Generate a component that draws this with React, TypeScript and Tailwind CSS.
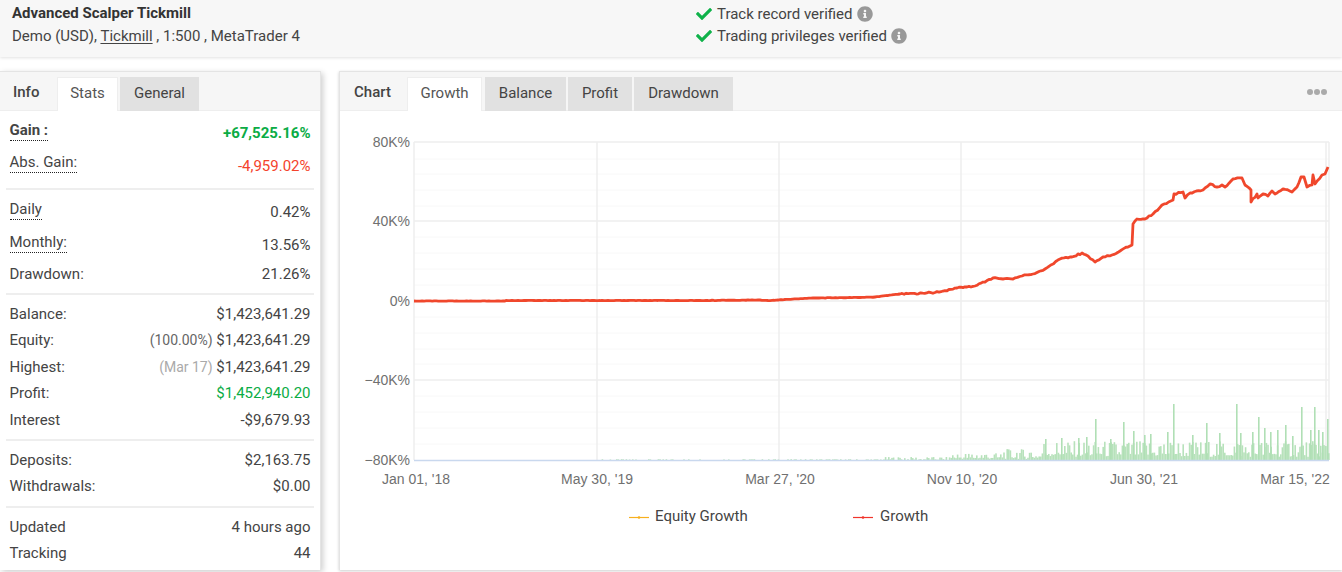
import { FaCheck, FaInfoCircle } from "react-icons/fa";

const font = { fontFamily: '"Roboto", "Liberation Sans", sans-serif' };

// pseudo random but stable numbers for the jagged line and the volume bars
function rnd(i: number) {
  const v = Math.sin(i * 12.9898) * 43758.5453;
  return v - Math.floor(v);
}

// growth curve, read off the reference in page coordinates
const knots: [number, number][] = [
  [414, 301], [505, 301], [506, 300.5], [700, 300.5], [760, 300], [768, 300.5], [815, 298], [858, 297.5], [875, 297], [900, 294],
  [935, 292.5], [957, 288], [975, 286], [985, 282], [993, 278], [1003, 279], [1013, 279], [1022, 276],
  [1033, 274], [1045, 269], [1060, 259], [1072, 257], [1082, 253], [1088, 256], [1095, 262], [1103, 257],
  [1112, 255], [1120, 251], [1130, 246], [1132, 245], [1133, 224], [1137, 219], [1145, 219], [1153, 214],
  [1162, 205], [1173, 200], [1174, 194], [1183, 192], [1185, 198], [1190, 193], [1203, 190], [1210, 184],
  [1217, 187], [1222, 185], [1225, 187], [1233, 179], [1242, 178], [1245, 185], [1251, 190], [1251, 202],
  [1257, 194], [1258, 198], [1263, 194], [1268, 196], [1272, 191], [1275, 194], [1283, 189], [1292, 192],
  [1297, 187], [1301, 177], [1304, 177], [1307, 187], [1312, 185], [1313, 175], [1315, 184], [1322, 175],
  [1325, 174], [1328, 167],
];
const jagged: string[] = [];
knots.forEach(([x, y], k) => {
  jagged.push(`${x},${y}`);
  const next = knots[k + 1];
  if (!next) return;
  const steps = Math.floor((next[0] - x) / 2);
  for (let s = 1; s < steps; s++) {
    const t = s / steps;
    const amp = x > 880 ? 1.5 : 0.4;
    jagged.push(`${x + (next[0] - x) * t},${y + (next[1] - y) * t + (rnd(x + s) - 0.5) * amp}`);
  }
});
const linePoints = jagged.join(" ");

const peaks: [number, number][] = [
  [1045, 21], [1061, 22], [1095, 41], [1123, 38], [1133, 29], [1144, 25], [1173, 56], [1206, 37], [1236, 56],
  [1258, 43], [1285, 35], [1301, 53], [1314, 53], [1327, 41], [1167, 28], [1252, 28], [1270, 28], [1318, 30], [1322, 28],
  [1078, 22], [1086, 23], [1110, 21], [1150, 26], [1192, 25], [1219, 27], [1240, 27], [1264, 32], [1277, 30], [1292, 24], [1310, 30],
];
const bars: { x: number; h: number }[] = [];
for (let i = 0; i < 460; i++) {
  const x = 600 + i * 1.6;
  if (x > 1329) break;
  const r = rnd(i);
  let max = 0.8;
  if (x > 880) max = 3;
  if (x > 950) max = 6;
  if (x > 1000) max = 10;
  if (x > 1040) max = 16;
  const min = x > 1040 ? 3 : x > 950 ? 1 : 0;
  const h = min + (r < 0.6 ? max * r * 0.5 : max * r);
  if (h > 0.3 && (x > 880 || r > 0.6)) bars.push({ x, h });
}

const hMajor = [142, 221, 301, 380];
const hMinor = [159, 174, 190, 206, 237, 253, 269, 285, 317, 333, 349, 364, 396, 412, 428, 444];
const vLines = [414, 597, 779, 961, 1144, 1326, 1329];
const xLabels: [number, string][] = [
  [416, "Jan 01, '18"], [597, "May 30, '19"], [780, "Mar 27, '20"], [962, "Nov 10, '20"], [1144, "Jun 30, '21"], [1295, "Mar 15, '22"],
];
const yLabels: [number, string][] = [[147, "80K%"], [226, "40K%"], [306, "0%"], [385, "−40K%"], [465, "−80K%"]];

function Chart() {
  return (
    <svg viewBox="340 111 1002 459" className="block h-[459px] w-[1002px]">
      {hMinor.map((y) => (
        <line key={y} x1={414} x2={1329} y1={y} y2={y} stroke="#f8f8f8" strokeWidth={1} />
      ))}
      {hMajor.map((y) => (
        <line key={y} x1={414} x2={1329} y1={y} y2={y} stroke="#eeeeee" strokeWidth={1.5} />
      ))}
      {vLines.map((x) => (
        <line key={x} x1={x} x2={x} y1={142} y2={460} stroke="#eeeeee" strokeWidth={1.5} />
      ))}
      {bars.map((b) => (
        <rect key={b.x} x={b.x} y={460 - b.h} width={1.6} height={b.h} fill="#b7e2bb" />
      ))}
      {peaks.map(([x, h]) => (
        <rect key={x} x={x} y={460 - h} width={1.6} height={h} fill="#b0dfb5" />
      ))}
      <line x1={414} x2={1329} y1={460.5} y2={460.5} stroke="#c9d8ee" strokeWidth={1.5} />
      <polyline points={linePoints} fill="none" stroke="#f2a51f" strokeWidth={1} strokeLinejoin="round" />
      <polyline points={linePoints} fill="none" stroke="#f0472c" strokeWidth={2.8} strokeLinejoin="round" />
      <g fill="#707070" fontSize={14} style={{ fontFamily: '"Liberation Sans", sans-serif' }}>
        {yLabels.map(([y, t]) => (
          <text key={t} x={410} y={y} textAnchor="end">
            {t}
          </text>
        ))}
        {xLabels.map(([x, t]) => (
          <text key={t} x={x} y={484} textAnchor="middle">
            {t}
          </text>
        ))}
      </g>
      <line x1={629} x2={649} y1={517.5} y2={517.5} stroke="#f7b01e" strokeWidth={1.2} />
      <circle cx={639} cy={517.5} r={1.3} fill="#f7b01e" />
      <line x1={853} x2={873} y1={517.5} y2={517.5} stroke="#f0352c" strokeWidth={1.2} />
      <circle cx={863} cy={517.5} r={1.3} fill="#f0352c" />
      <g fill="#444444" fontSize={15} style={font}>
        <text x={655} y={521}>Equity Growth</text>
        <text x={880} y={521}>Growth</text>
      </g>
    </svg>
  );
}

function Row({ label, children }: { label: string; children: React.ReactNode }) {
  return (
    <div className="flex h-[26.6px] items-center justify-between px-[9.5px]">
      <span>{label}</span>
      <span>{children}</span>
    </div>
  );
}

function DotRow({ label, value, bold, valueClass }: { label: string; value: string; bold?: boolean; valueClass?: string }) {
  return (
    <div className="flex items-start justify-between px-[9.5px]">
      <span className={`border-b border-dotted border-[#222] leading-[19px] ${bold ? "font-bold" : ""}`}>{label}</span>
      <span className={`pt-[3px] leading-[19px] ${valueClass ?? ""}`}>{value}</span>
    </div>
  );
}

function Tab({ label, active, w }: { label: string; active?: boolean; w: string }) {
  return (
    <div
      className={`flex h-[34px] items-center justify-center pb-[2px] ${w} ${
        active ? "-mb-px border-x border-t border-[#eeeeee] bg-white text-[#555]" : "mb-[-1px] bg-[#e1e1e1] text-[#444]"
      }`}
    >
      {label}
    </div>
  );
}

const Divider = () => <div className="mx-[6px] h-[2px] bg-[#eeeeee]" />;

export default function App() {
  return (
    <div className="h-[572px] w-[1342px] overflow-hidden bg-white text-[15px] text-[#444]" style={font}>
      <header className="flex h-[57px] bg-[#f7f7f7] shadow-[0_1px_3px_rgba(0,0,0,0.12)]">
        <div className="w-[696px] pl-3 pt-[3px]">
          <div className="font-bold leading-[20px] text-[#333]">Advanced Scalper Tickmill</div>
          <div className="mt-[3px] leading-[20px]">
            Demo (USD), <span className="underline underline-offset-2">Tickmill</span> , 1:500 , MetaTrader 4
          </div>
        </div>
        <div className="pt-[3px] leading-[22px]">
          <div className="flex items-center">
            <FaCheck className="mr-[5px] h-[16px] w-[16px] text-[#0fb24a]" />
            Track record verified
            <FaInfoCircle className="ml-[4px] h-[16px] w-[16px] text-[#999]" />
          </div>
          <div className="flex items-center">
            <FaCheck className="mr-[5px] h-[16px] w-[16px] text-[#0fb24a]" />
            Trading privileges verified
            <FaInfoCircle className="ml-[4px] h-[16px] w-[16px] text-[#999]" />
          </div>
        </div>
      </header>

      <main className="mt-[14px] flex items-start gap-[18px]">
        <section className="h-[499px] w-[321px] shrink-0 border-t border-r border-[#e4e4e4] bg-white shadow-[2px_2px_6px_rgba(0,0,0,0.2)]">
          <div className="flex h-[39px] items-end border-b border-[#eeeeee] bg-[#f6f6f6]">
            <div className="flex h-[34px] w-[57px] items-center pb-[2px] pl-[13px] font-medium">Info</div>
            <Tab label="Stats" active w="w-[61px]" />
            <div className="w-[2px]" />
            <Tab label="General" w="w-[79px]" />
          </div>
          <div className="pt-[10px]">
            <DotRow label="Gain :" value="+67,525.16%" bold valueClass="font-bold text-[#0bac45]" />
            <div className="h-[10px]" />
            <DotRow label="Abs. Gain:" value="-4,959.02%" valueClass="translate-y-px text-[#f4432c]" />
            <div className="h-[13px]" />
            <Divider />
            <div className="h-[10px]" />
            <DotRow label="Daily" value="0.42%" />
            <div className="h-[11px]" />
            <DotRow label="Monthly:" value="13.56%" />
            <div className="h-[6px]" />
            <Row label="Drawdown:">21.26%</Row>
            <div className="h-[5px]" />
            <Divider />
            <div className="h-[6px]" />
            <Row label="Balance:">$1,423,641.29</Row>
            <Row label="Equity:">
              <span className="text-[14px] text-[#666]">(100.00%)</span> $1,423,641.29
            </Row>
            <Row label="Highest:">
              <span className="text-[14px] text-[#aaa]">(Mar 17)</span> $1,423,641.29
            </Row>
            <Row label="Profit:">
              <span className="text-[#0bac45]">$1,452,940.20</span>
            </Row>
            <Row label="Interest">-$9,679.93</Row>
            <div className="h-[5px]" />
            <Divider />
            <div className="h-[6px]" />
            <Row label="Deposits:">$2,163.75</Row>
            <Row label="Withdrawals:">$0.00</Row>
            <div className="h-[6px]" />
            <Divider />
            <div className="h-[6px]" />
            <Row label="Updated">4 hours ago</Row>
            <Row label="Tracking">44</Row>
          </div>
        </section>

        <section className="h-[499px] w-[1003px] shrink-0 border-t border-l border-[#e4e4e4] bg-white shadow-[0_1px_3px_rgba(0,0,0,0.2)]">
          <div className="flex h-[39px] items-end border-b border-[#eeeeee] bg-[#f6f6f6]">
            <div className="flex h-[34px] w-[67px] items-center pb-[2px] pl-[14px] font-medium">Chart</div>
            <Tab label="Growth" active w="w-[75px]" />
            <div className="w-[3px]" />
            <Tab label="Balance" w="w-[81px]" />
            <div className="w-[2px]" />
            <Tab label="Profit" w="w-[64px]" />
            <div className="w-[2px]" />
            <Tab label="Drawdown" w="w-[99px]" />
            <div className="mb-[15px] ml-auto mr-[15px] flex gap-[1px]">
              <span className="h-[6px] w-[6px] rounded-full bg-[#aaa]" />
              <span className="h-[6px] w-[6px] rounded-full bg-[#aaa]" />
              <span className="h-[6px] w-[6px] rounded-full bg-[#aaa]" />
            </div>
          </div>
          <Chart />
        </section>
      </main>
    </div>
  );
}
